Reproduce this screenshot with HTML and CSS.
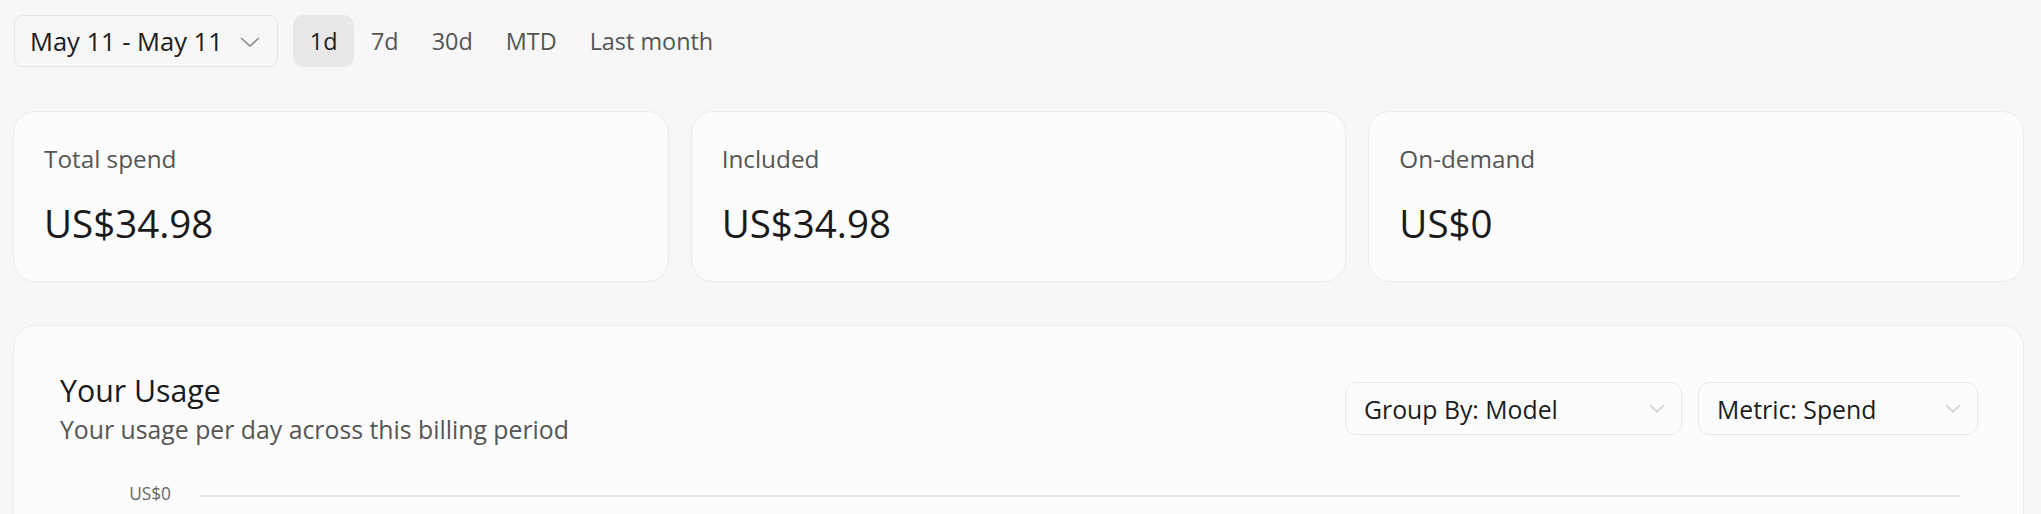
FILE: index.html
```html
<!DOCTYPE html>
<html lang="en">
<head>
<meta charset="utf-8">
<title>Usage</title>
<link rel="stylesheet" href="styles.css">
</head>
<body>
<main class="page">
  <div class="toolbar">
    <button class="date-btn">
      <span class="date-text">May 11 - May 11</span>
      <svg class="chev" width="20" height="10" viewBox="0 0 20 10"><path d="M1 1 L10 9 L19 1" fill="none" stroke="#8a8a8a" stroke-width="1.6"/></svg>
    </button>
    <div class="tabs">
      <button class="tab active">1d</button>
      <button class="tab">7d</button>
      <button class="tab">30d</button>
      <button class="tab">MTD</button>
      <button class="tab">Last month</button>
    </div>
  </div>

  <section class="stats">
    <div class="stat-card">
      <div class="stat-label">Total spend</div>
      <div class="stat-value">US$34.98</div>
    </div>
    <div class="stat-card">
      <div class="stat-label">Included</div>
      <div class="stat-value">US$34.98</div>
    </div>
    <div class="stat-card">
      <div class="stat-label">On-demand</div>
      <div class="stat-value">US$0</div>
    </div>
  </section>

  <section class="usage-card">
    <div class="usage-head">
      <div class="usage-titles">
        <h2 class="usage-title">Your Usage</h2>
        <p class="usage-sub">Your usage per day across this billing period</p>
      </div>
      <div class="selects">
        <button class="select select-group">
          <span>Group By: Model</span>
          <svg class="chev-sm" width="16" height="9" viewBox="0 0 16 9"><path d="M1 1 L8 8 L15 1" fill="none" stroke="#c9c9c9" stroke-width="1.4"/></svg>
        </button>
        <button class="select select-metric">
          <span>Metric: Spend</span>
          <svg class="chev-sm" width="16" height="9" viewBox="0 0 16 9"><path d="M1 1 L8 8 L15 1" fill="none" stroke="#c9c9c9" stroke-width="1.4"/></svg>
        </button>
      </div>
    </div>
    <div class="chart">
      <div class="chart-row">
        <span class="axis-label">US$0</span>
        <span class="grid-line"></span>
      </div>
    </div>
  </section>
</main>
</body>
</html>
```

FILE: styles.css
```css
* { box-sizing: border-box; }

html, body {
  margin: 0;
  padding: 0;
  background: #f7f7f7;
}

body {
  font-family: "Open Sans", "Noto Sans", sans-serif;
  color: #1c1c1c;
}

button {
  font-family: inherit;
  cursor: pointer;
}

.page {
  padding: 15px 17px 0 13px;
}

.toolbar {
  display: flex;
  align-items: center;
  gap: 15px;
  margin-left: 1px;
}

.date-btn {
  display: flex;
  align-items: center;
  gap: 17px;
  height: 52px;
  padding: 0 17px 0 15px;
  background: #f7f7f7;
  border: 1px solid #e4e4e4;
  border-radius: 9px;
  color: #1c1c1c;
}

.date-text {
  font-size: 25.5px;
  line-height: 34px;
}

.chev { display: block; margin-top: 1px; }

.tabs {
  display: flex;
  align-items: center;
}

.tab {
  height: 52px;
  padding: 0 16.5px;
  border: none;
  border-radius: 10px;
  background: transparent;
  font-size: 23.4px;
  line-height: 34px;
  color: #555;
}

.tab.active {
  background: #e8e8e8;
  color: #1c1c1c;
  padding: 0 17px;
}

.stats {
  display: grid;
  grid-template-columns: repeat(3, 1fr);
  gap: 22px;
  margin-top: 44px;
}

.stat-card {
  background: #fcfcfc;
  border: 1px solid #ebebeb;
  border-radius: 22px;
  padding: 30px 30px 34px;
}

.stat-label {
  font-size: 24.3px;
  line-height: 34px;
  color: #555;
}

.stat-value {
  margin-top: 23px;
  font-size: 38.5px;
  line-height: 48px;
  color: #1a1a1a;
}

.usage-card {
  margin-top: 43px;
  background: #fcfcfc;
  border: 1px solid #ebebeb;
  border-radius: 22px;
  padding: 46px 45px 0 46px;
  min-height: 400px;
}

.usage-head {
  display: flex;
  justify-content: space-between;
  align-items: center;
}

.usage-title {
  margin: 0;
  font-size: 30.3px;
  line-height: 38px;
  font-weight: 400;
  color: #1a1a1a;
}

.usage-sub {
  margin: 2px 0 0;
  font-size: 24.8px;
  line-height: 34px;
  color: #555;
}

.selects {
  display: flex;
  gap: 16px;
  margin-top: -1px;
}

.select {
  display: flex;
  align-items: center;
  justify-content: space-between;
  height: 53px;
  padding: 0 16px 0 18px;
  background: #fcfcfc;
  border: 1px solid #e8e8e8;
  border-radius: 11px;
  font-size: 24.8px;
  line-height: 34px;
  color: #1c1c1c;
}

.select-group { width: 337px; }
.select-metric { width: 280px; }

.chev-sm { display: block; }

.chart {
  margin-top: 36px;
  height: 300px;
}

.chart-row {
  display: flex;
  align-items: center;
  padding-right: 17px;
}

.axis-label {
  width: 111px;
  text-align: right;
  font-size: 17.3px;
  line-height: 24px;
  color: #666;
}

.grid-line {
  flex: 1;
  height: 2px;
  margin: 3px 0 0 29px;
  background: #e8e8e8;
}
```
